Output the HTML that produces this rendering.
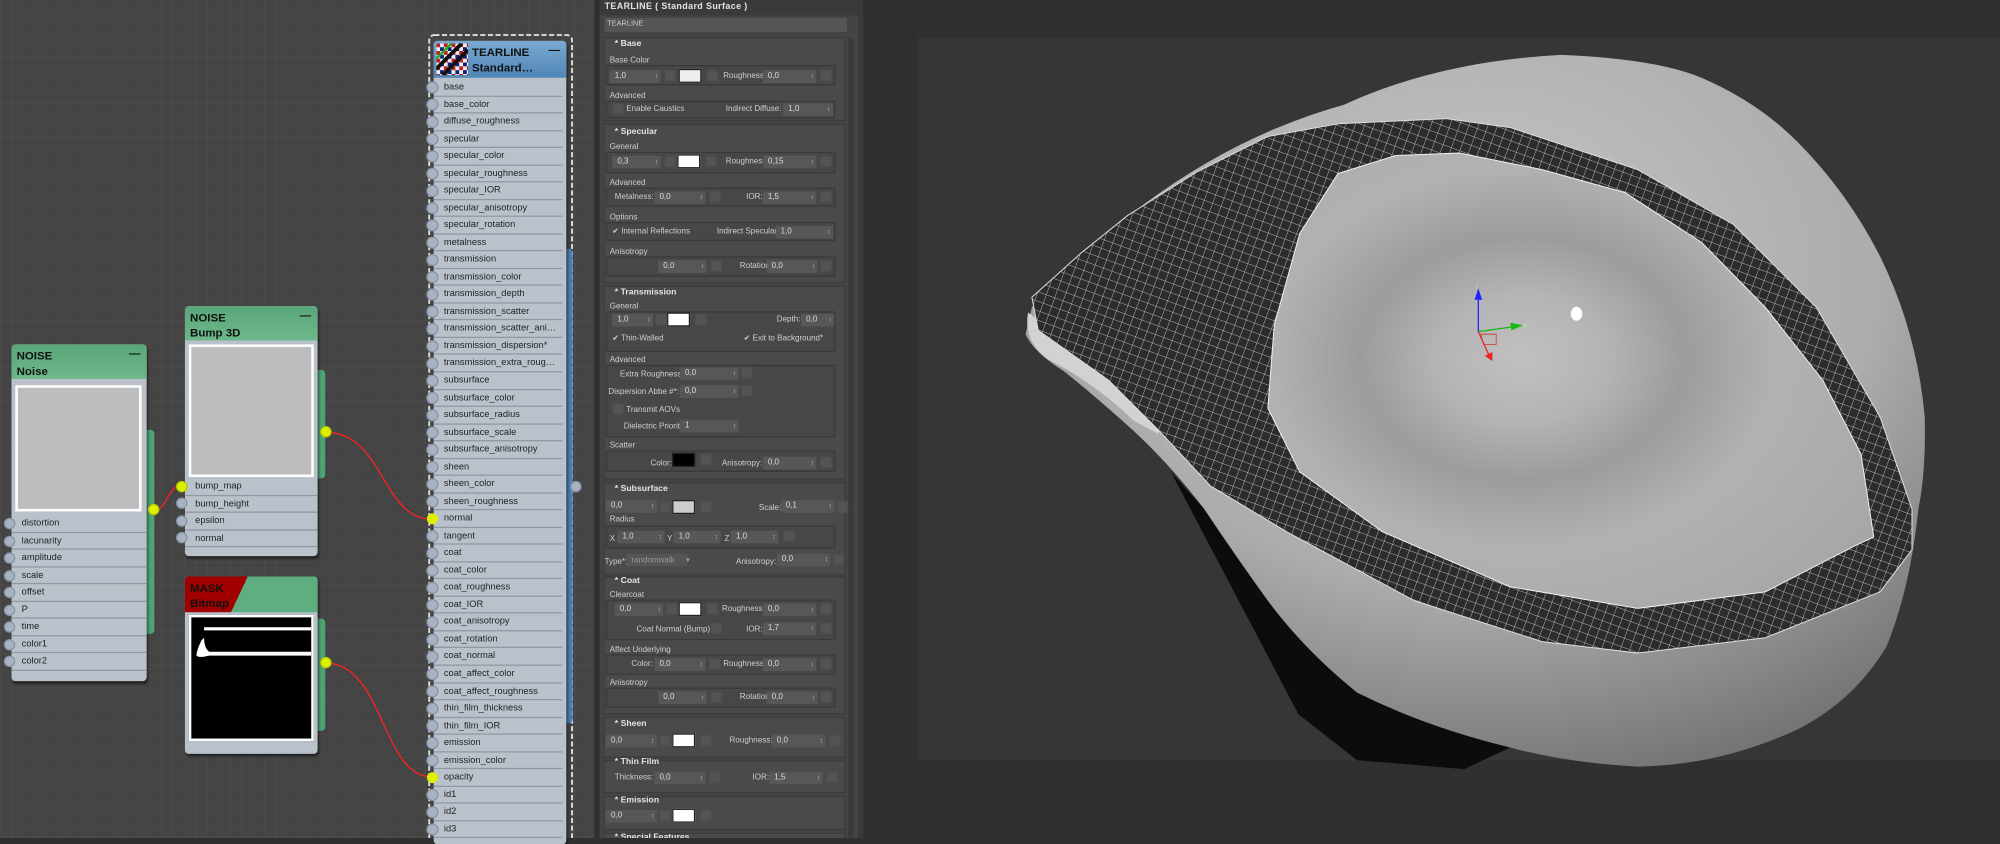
<!DOCTYPE html>
<html><head><meta charset="utf-8">
<style>
*{margin:0;padding:0;box-sizing:border-box}
body{width:2000px;height:838px;overflow:hidden;background:#303030;font-family:"Liberation Sans",sans-serif}
#w{position:absolute;left:0;top:0;width:1568px;height:657px;transform:scale(1.27551);transform-origin:0 0}
.a{position:absolute}
#ne{left:0;top:0;width:466px;height:657px;background-color:#444;
background-image:repeating-linear-gradient(0deg,rgba(255,255,255,.018) 0 1px,transparent 1px 9px),repeating-linear-gradient(90deg,rgba(255,255,255,.018) 0 1px,transparent 1px 9px)}
.node{position:absolute;background:#b9c2ca;border-radius:3px;box-shadow:1px 2px 2px rgba(0,0,0,.5)}
.hd{position:absolute;left:0;top:0;right:0;background:linear-gradient(#5aa579,#6db88b);font:bold 9px "Liberation Sans",sans-serif;color:#111;padding:3px 4px;line-height:12px;border-radius:3px 3px 0 0}
.hd b{position:absolute;right:5px;top:1px;font-weight:bold}
.row{position:absolute;left:0;right:0;height:13.5px;border-bottom:1px solid #8f99a3;font-size:7.3px;color:#222;line-height:12.5px;padding-left:8px}
.s{position:absolute;width:9px;height:9px;border-radius:50%;background:#a7b2c2;border:1px solid #8893a3}
.y{background:#dcf000;border-color:#b9c900}
.prev{position:absolute;background:#bdbdbd;border:2px solid #fff}
.tab{position:absolute;background:#4fa372;border-radius:0 3px 3px 0}
#pn{left:468px;top:0;width:205px;height:657px;background:#444;border-left:2px solid #2d2d2d;overflow:hidden}
.t{position:absolute;font-size:6.3px;color:#cfcfcf;white-space:nowrap}
.h{position:absolute;font-size:6.8px;color:#e4e4e4;font-weight:bold;white-space:nowrap}
.sec{position:absolute;left:3px;width:190px;background:#4a4a4a;border:1px solid #3c3c3c}
.grp{position:absolute;left:5px;width:180px;border:1px solid #393939;background:#474747;border-radius:1px}
.sp{position:absolute;height:10px;background:#575757;font-size:6.3px;color:#ddd;line-height:10px;padding-left:4px}
.sp:after{content:"\2195";position:absolute;right:2px;top:0;font-size:5px;color:#ccc}
.bx{position:absolute;width:9px;height:9px;background:#545454;border:1px solid #4e4e4e}
.sw{position:absolute;width:18px;height:11px;border:1px solid #222}
</style></head><body>
<div id="w">
<div id="ne" class="a"></div>

<svg class="a" style="left:0;top:0" width="466" height="657">
<path d="M121 400 C131 400,131 381,142 381" stroke="#ff2020" stroke-width="1" fill="none"/>
<path d="M256 339 C300 339,300 407,338 407" stroke="#ff2020" stroke-width="1" fill="none"/>
<path d="M256 520 C300 520,300 609,338 609" stroke="#ff2020" stroke-width="1" fill="none"/>
<rect x="336.5" y="27.5" width="112" height="640" rx="4" fill="none" stroke="#ddd" stroke-width="1.5" stroke-dasharray="4 2"/>
</svg>

<div class="tab" style="left:113px;top:337px;width:8px;height:160px"></div>
<div class="node" style="left:9px;top:270px;width:106px;height:264px">
<div class="hd" style="height:27px">NOISE<br>Noise<b>—</b></div>
<div class="prev" style="left:3px;top:32px;width:99px;height:99px"></div>
</div>
<div class="a" style="left:9px;top:404px;width:106px">
<div class="row" style="top:0">distortion</div><div class="row" style="top:13.5px">lacunarity</div><div class="row" style="top:27px">amplitude</div><div class="row" style="top:40.5px">scale</div><div class="row" style="top:54px">offset</div><div class="row" style="top:67.5px">P</div><div class="row" style="top:81px">time</div><div class="row" style="top:94.5px">color1</div><div class="row" style="top:108px">color2</div>
</div>
<div class="s" style="left:3px;top:406px"></div><div class="s" style="left:3px;top:419.5px"></div><div class="s" style="left:3px;top:433px"></div><div class="s" style="left:3px;top:446.5px"></div><div class="s" style="left:3px;top:460px"></div><div class="s" style="left:3px;top:473.5px"></div><div class="s" style="left:3px;top:487px"></div><div class="s" style="left:3px;top:500.5px"></div><div class="s" style="left:3px;top:514px"></div>
<div class="s y" style="left:116px;top:395px"></div>

<div class="tab" style="left:247px;top:290px;width:8px;height:85px"></div>
<div class="node" style="left:145px;top:240px;width:104px;height:196px">
<div class="hd" style="height:27px">NOISE<br>Bump 3D<b>—</b></div>
<div class="prev" style="left:3px;top:30px;width:98px;height:104px"></div>
</div>
<div class="a" style="left:145px;top:375px;width:104px">
<div class="row" style="top:0">bump_map</div><div class="row" style="top:13.5px">bump_height</div><div class="row" style="top:27px">epsilon</div><div class="row" style="top:40.5px">normal</div>
</div>
<div class="s y" style="left:138px;top:376.5px"></div><div class="s" style="left:138px;top:390px"></div><div class="s" style="left:138px;top:403.5px"></div><div class="s" style="left:138px;top:417px"></div>
<div class="s y" style="left:251px;top:334px"></div>

<div class="tab" style="left:247px;top:485px;width:8px;height:88px"></div>
<div class="node" style="left:145px;top:452px;width:104px;height:139px">
<div class="hd" style="height:28px;background:linear-gradient(115deg,#a00000 0 42%,#5fae80 42%)">MASK<br>Bitmap</div>
<div class="prev" style="left:3px;top:30px;width:98px;height:99px;background:#000"></div>
<svg class="a" style="left:5px;top:32px" width="94" height="40"><path d="M10 9 H94" stroke="#fff" stroke-width="2.5"/><path d="M8 18 Q4 26 4 30 Q6 32 14 30 L94 30 V27 L14 27 Q10 24 10 16Z" fill="#fff"/></svg>
</div>
<div class="s y" style="left:251px;top:515px"></div>

<div class="a" style="left:443px;top:195px;width:6px;height:372px;background:#4c7fae;border-radius:0 3px 3px 0"></div>
<div class="s" style="left:447px;top:377px"></div>
<div class="node" style="left:340px;top:32px;width:104px;height:630px;border-radius:3px">
<div class="hd" style="height:29px;background:linear-gradient(#7aa9d2,#4f86b8);padding-left:30px">TEARLINE<br>Standard…<b>—</b></div>
<svg class="a" style="left:2px;top:2px" width="25" height="25"><defs><pattern id="ck" width="6" height="6" patternUnits="userSpaceOnUse"><rect width="6" height="6" fill="#eee"/><rect width="3" height="3" fill="#c02020"/><rect x="3" y="3" width="3" height="3" fill="#102080"/></pattern></defs><rect width="25" height="25" fill="url(#ck)"/><path d="M0 20 L20 0 M5 25 L25 5" stroke="#111" stroke-width="3"/><path d="M0 12 L12 0" stroke="#2a2" stroke-width="2"/></svg>
</div>
<div class="a" style="left:340px;top:62px;width:101px">
<div class="row" style="top:0px">base</div><div class="row" style="top:13.53px">base_color</div><div class="row" style="top:27.06px">diffuse_roughness</div><div class="row" style="top:40.59px">specular</div><div class="row" style="top:54.12px">specular_color</div><div class="row" style="top:67.65px">specular_roughness</div><div class="row" style="top:81.18px">specular_IOR</div><div class="row" style="top:94.71px">specular_anisotropy</div><div class="row" style="top:108.24px">specular_rotation</div><div class="row" style="top:121.77px">metalness</div><div class="row" style="top:135.3px">transmission</div><div class="row" style="top:148.83px">transmission_color</div><div class="row" style="top:162.36px">transmission_depth</div><div class="row" style="top:175.89px">transmission_scatter</div><div class="row" style="top:189.42px">transmission_scatter_ani…</div><div class="row" style="top:202.95px">transmission_dispersion*</div><div class="row" style="top:216.48px">transmission_extra_roug…</div><div class="row" style="top:230.01px">subsurface</div><div class="row" style="top:243.54px">subsurface_color</div><div class="row" style="top:257.07px">subsurface_radius</div><div class="row" style="top:270.6px">subsurface_scale</div><div class="row" style="top:284.13px">subsurface_anisotropy</div><div class="row" style="top:297.66px">sheen</div><div class="row" style="top:311.19px">sheen_color</div><div class="row" style="top:324.72px">sheen_roughness</div><div class="row" style="top:338.25px">normal</div><div class="row" style="top:351.78px">tangent</div><div class="row" style="top:365.31px">coat</div><div class="row" style="top:378.84px">coat_color</div><div class="row" style="top:392.37px">coat_roughness</div><div class="row" style="top:405.9px">coat_IOR</div><div class="row" style="top:419.43px">coat_anisotropy</div><div class="row" style="top:432.96px">coat_rotation</div><div class="row" style="top:446.49px">coat_normal</div><div class="row" style="top:460.02px">coat_affect_color</div><div class="row" style="top:473.55px">coat_affect_roughness</div><div class="row" style="top:487.08px">thin_film_thickness</div><div class="row" style="top:500.61px">thin_film_IOR</div><div class="row" style="top:514.14px">emission</div><div class="row" style="top:527.67px">emission_color</div><div class="row" style="top:541.2px">opacity</div><div class="row" style="top:554.73px">id1</div><div class="row" style="top:568.26px">id2</div><div class="row" style="top:581.79px">id3</div>
</div>
<svg class="a" style="left:333px;top:62px" width="12" height="595">
<g fill="#a7b2c2" stroke="#8893a3" stroke-width="1">
<circle cx="6" cy="6.5" r="4.3"/><circle cx="6" cy="20" r="4.3"/><circle cx="6" cy="33.6" r="4.3"/><circle cx="6" cy="47.1" r="4.3"/><circle cx="6" cy="60.6" r="4.3"/><circle cx="6" cy="74.2" r="4.3"/><circle cx="6" cy="87.7" r="4.3"/><circle cx="6" cy="101.2" r="4.3"/><circle cx="6" cy="114.7" r="4.3"/><circle cx="6" cy="128.3" r="4.3"/><circle cx="6" cy="141.8" r="4.3"/><circle cx="6" cy="155.3" r="4.3"/><circle cx="6" cy="168.9" r="4.3"/><circle cx="6" cy="182.4" r="4.3"/><circle cx="6" cy="195.9" r="4.3"/><circle cx="6" cy="209.5" r="4.3"/><circle cx="6" cy="223" r="4.3"/><circle cx="6" cy="236.5" r="4.3"/><circle cx="6" cy="250" r="4.3"/><circle cx="6" cy="263.6" r="4.3"/><circle cx="6" cy="277.1" r="4.3"/><circle cx="6" cy="290.6" r="4.3"/><circle cx="6" cy="304.2" r="4.3"/><circle cx="6" cy="317.7" r="4.3"/><circle cx="6" cy="331.2" r="4.3"/><circle cx="6" cy="358.3" r="4.3"/><circle cx="6" cy="371.8" r="4.3"/><circle cx="6" cy="385.3" r="4.3"/><circle cx="6" cy="398.9" r="4.3"/><circle cx="6" cy="412.4" r="4.3"/><circle cx="6" cy="425.9" r="4.3"/><circle cx="6" cy="439.5" r="4.3"/><circle cx="6" cy="453" r="4.3"/><circle cx="6" cy="466.5" r="4.3"/><circle cx="6" cy="480.1" r="4.3"/><circle cx="6" cy="493.6" r="4.3"/><circle cx="6" cy="507.1" r="4.3"/><circle cx="6" cy="520.6" r="4.3"/><circle cx="6" cy="534.2" r="4.3"/><circle cx="6" cy="561.2" r="4.3"/><circle cx="6" cy="574.8" r="4.3"/><circle cx="6" cy="588.3" r="4.3"/>
</g>
<circle cx="6" cy="344.8" r="4.3" fill="#dcf000"/><circle cx="6" cy="547.7" r="4.3" fill="#dcf000"/>
</svg>

<!-- panel -->
<div id="pn" class="a">
<div class="a" style="left:0;top:0;width:203px;height:12px;background:#3a3a3a"></div>
<div class="h" style="left:4px;top:2px;font-size:7px;letter-spacing:.3px">TEARLINE ( Standard Surface )</div>
<div class="a" style="left:4px;top:14px;width:190px;height:11px;background:#555"></div>
<div class="t" style="left:6px;top:16px;font-size:5.8px">TEARLINE</div>
<div class="a" style="left:195px;top:30px;width:4px;height:627px;background:#3a3a3a"></div>

<div class="sec" style="top:29px;height:66px"></div>
<div class="h" style="left:12px;top:31px">* Base</div>
<div class="grp" style="top:51px;height:16px"></div><div class="t" style="left:8px;top:44px">Base Color</div>
<div class="sp" style="left:8px;top:55px;width:40px">1,0</div><div class="bx" style="left:51px;top:55px"></div><div class="sw" style="left:62px;top:54px;background:#eee"></div><div class="bx" style="left:84px;top:55px"></div><div class="t" style="left:97px;top:56px">Roughness:</div><div class="sp" style="left:128px;top:55px;width:42px">0,0</div><div class="bx" style="left:173px;top:55px"></div>
<div class="grp" style="top:79px;height:14px"></div><div class="t" style="left:8px;top:72px">Advanced</div>
<div class="bx" style="left:10px;top:81px"></div><div class="t" style="left:21px;top:82px">Enable Caustics</div><div class="t" style="left:99px;top:82px">Indirect Diffuse:</div><div class="sp" style="left:144px;top:81px;width:39px">1,0</div>

<div class="sec" style="top:97px;height:125px"></div>
<div class="h" style="left:12px;top:100px">* Specular</div>
<div class="grp" style="top:119px;height:17px"></div><div class="t" style="left:8px;top:112px">General</div>
<div class="sp" style="left:10px;top:122px;width:38px">0,3</div><div class="bx" style="left:51px;top:122px"></div><div class="sw" style="left:61px;top:121px;background:#fff"></div><div class="bx" style="left:83px;top:122px"></div><div class="t" style="left:99px;top:123px">Roughness:</div><div class="sp" style="left:128px;top:122px;width:42px">0,15</div><div class="bx" style="left:173px;top:122px"></div>
<div class="grp" style="top:147px;height:15px"></div><div class="t" style="left:8px;top:140px">Advanced</div>
<div class="t" style="left:12px;top:151px">Metalness:</div><div class="sp" style="left:43px;top:150px;width:40px">0,0</div><div class="bx" style="left:86px;top:150px"></div><div class="t" style="left:115px;top:151px">IOR:</div><div class="sp" style="left:128px;top:150px;width:42px">1,5</div><div class="bx" style="left:173px;top:150px"></div>
<div class="grp" style="top:174px;height:15px"></div><div class="t" style="left:8px;top:167px">Options</div>
<div class="t" style="left:10px;top:178px">✔ Internal Reflections</div><div class="t" style="left:92px;top:178px">Indirect Specular:</div><div class="sp" style="left:138px;top:177px;width:45px">1,0</div>
<div class="grp" style="top:201px;height:16px"></div><div class="t" style="left:8px;top:194px">Anisotropy</div>
<div class="sp" style="left:46px;top:204px;width:38px">0,0</div><div class="bx" style="left:87px;top:204px"></div><div class="t" style="left:110px;top:205px">Rotation:</div><div class="sp" style="left:131px;top:204px;width:40px">0,0</div><div class="bx" style="left:173px;top:204px"></div>

<div class="sec" style="top:224px;height:152px"></div>
<div class="h" style="left:12px;top:226px">* Transmission</div>
<div class="grp" style="top:244px;height:32px"></div><div class="t" style="left:8px;top:237px">General</div>
<div class="sp" style="left:10px;top:246px;width:32px">1,0</div><div class="bx" style="left:44px;top:246px"></div><div class="sw" style="left:53px;top:245px;background:#fff"></div><div class="bx" style="left:75px;top:246px"></div><div class="t" style="left:139px;top:247px">Depth:</div><div class="sp" style="left:158px;top:246px;width:26px">0,0</div>
<div class="t" style="left:10px;top:262px">✔ Thin-Walled</div><div class="t" style="left:113px;top:262px">✔ Exit to Background*</div>
<div class="grp" style="top:286px;height:57px"></div><div class="t" style="left:8px;top:279px">Advanced</div>
<div class="t" style="left:16px;top:290px">Extra Roughness:</div><div class="sp" style="left:63px;top:288px;width:46px">0,0</div><div class="bx" style="left:111px;top:288px"></div>
<div class="t" style="left:7px;top:304px">Dispersion Abbe #*:</div><div class="sp" style="left:63px;top:302px;width:46px">0,0</div><div class="bx" style="left:111px;top:302px"></div>
<div class="bx" style="left:10px;top:316px"></div><div class="t" style="left:21px;top:318px">Transmit AOVs</div>
<div class="t" style="left:19px;top:331px">Dielectric Priority</div><div class="sp" style="left:63px;top:329px;width:46px">1</div>
<div class="grp" style="top:353px;height:17px"></div><div class="t" style="left:8px;top:346px">Scatter</div>
<div class="t" style="left:40px;top:360px">Color:</div><div class="sw" style="left:57px;top:355px;background:#000"></div><div class="bx" style="left:79px;top:356px"></div><div class="t" style="left:96px;top:360px">Anisotropy:</div><div class="sp" style="left:128px;top:358px;width:42px">0,0</div><div class="bx" style="left:173px;top:358px"></div>

<div class="sec" style="top:378px;height:73px"></div>
<div class="h" style="left:12px;top:380px">* Subsurface</div>
<div class="sp" style="left:5px;top:392px;width:40px">0,0</div><div class="bx" style="left:47px;top:393px"></div><div class="sw" style="left:57px;top:392px;background:#ccc"></div><div class="bx" style="left:79px;top:393px"></div><div class="t" style="left:125px;top:395px">Scale:</div><div class="sp" style="left:142px;top:392px;width:42px">0,1</div><div class="bx" style="left:186px;top:393px"></div>
<div class="grp" style="top:412px;height:18px"></div><div class="t" style="left:8px;top:404px">Radius</div>
<div class="t" style="left:8px;top:419px">X</div><div class="sp" style="left:14px;top:416px;width:37px">1,0</div><div class="t" style="left:53px;top:419px">Y</div><div class="sp" style="left:58px;top:416px;width:37px">1,0</div><div class="t" style="left:98px;top:419px">Z</div><div class="sp" style="left:103px;top:416px;width:37px">1,0</div><div class="bx" style="left:144px;top:416px"></div>
<div class="t" style="left:4px;top:437px">Type*:</div><div class="a" style="left:21px;top:434px;width:48px;height:10px;background:#555"></div><div class="t" style="left:25px;top:436px;color:#999">randomwalk &nbsp; &nbsp; ▾</div><div class="t" style="left:107px;top:437px">Anisotropy:</div><div class="sp" style="left:139px;top:434px;width:42px">0,0</div><div class="bx" style="left:183px;top:434px"></div>

<div class="sec" style="top:452px;height:108px"></div>
<div class="h" style="left:12px;top:452px">* Coat</div>
<div class="grp" style="top:470px;height:32px"></div><div class="t" style="left:8px;top:463px">Clearcoat</div>
<div class="sp" style="left:12px;top:473px;width:38px">0,0</div><div class="bx" style="left:52px;top:473px"></div><div class="sw" style="left:62px;top:472px;background:#fff"></div><div class="bx" style="left:84px;top:473px"></div><div class="t" style="left:96px;top:474px">Roughness:</div><div class="sp" style="left:128px;top:473px;width:42px">0,0</div><div class="bx" style="left:173px;top:473px"></div>
<div class="t" style="left:29px;top:490px">Coat Normal (Bump):</div><div class="bx" style="left:87px;top:488px"></div><div class="t" style="left:115px;top:490px">IOR:</div><div class="sp" style="left:128px;top:488px;width:42px">1,7</div><div class="bx" style="left:173px;top:488px"></div>
<div class="grp" style="top:513px;height:16px"></div><div class="t" style="left:8px;top:506px">Affect Underlying</div>
<div class="t" style="left:25px;top:517px">Color:</div><div class="sp" style="left:43px;top:516px;width:40px">0,0</div><div class="bx" style="left:86px;top:516px"></div><div class="t" style="left:97px;top:517px">Roughness:</div><div class="sp" style="left:128px;top:516px;width:42px">0,0</div><div class="bx" style="left:173px;top:516px"></div>
<div class="grp" style="top:539px;height:16px"></div><div class="t" style="left:8px;top:532px">Anisotropy</div>
<div class="sp" style="left:46px;top:542px;width:38px">0,0</div><div class="bx" style="left:87px;top:542px"></div><div class="t" style="left:110px;top:543px">Rotation:</div><div class="sp" style="left:131px;top:542px;width:40px">0,0</div><div class="bx" style="left:173px;top:542px"></div>

<div class="sec" style="top:562px;height:32px"></div>
<div class="h" style="left:12px;top:564px">* Sheen</div>
<div class="sp" style="left:5px;top:576px;width:40px">0,0</div><div class="bx" style="left:47px;top:576px"></div><div class="sw" style="left:57px;top:575px;background:#fff"></div><div class="bx" style="left:79px;top:576px"></div><div class="t" style="left:102px;top:577px">Roughness:</div><div class="sp" style="left:135px;top:576px;width:42px">0,0</div><div class="bx" style="left:180px;top:576px"></div>

<div class="sec" style="top:596px;height:26px"></div>
<div class="h" style="left:12px;top:594px">* Thin Film</div>
<div class="t" style="left:12px;top:606px">Thickness:</div><div class="sp" style="left:43px;top:605px;width:40px">0,0</div><div class="bx" style="left:86px;top:605px"></div><div class="t" style="left:120px;top:606px">IOR:</div><div class="sp" style="left:133px;top:605px;width:42px">1,5</div><div class="bx" style="left:178px;top:605px"></div>

<div class="sec" style="top:624px;height:27px"></div>
<div class="h" style="left:12px;top:624px">* Emission</div>
<div class="sp" style="left:5px;top:635px;width:40px">0,0</div><div class="bx" style="left:47px;top:635px"></div><div class="sw" style="left:57px;top:634px;background:#fff"></div><div class="bx" style="left:79px;top:635px"></div>
<div class="sec" style="top:653px;height:10px"></div>
<div class="h" style="left:12px;top:653px">* Special Features</div>
</div>

<div class="a" style="left:673px;top:0;width:45px;height:657px;background:#2f2f2f"></div>
<div class="a" style="left:673px;top:0;width:4px;height:657px;background:#3a3a3a"></div>

<!-- viewport -->
<div class="a" style="left:718px;top:0;width:850px;height:657px;background:#303030"></div>
<div class="a" style="left:720px;top:30px;width:848px;height:566px;background:#363636"></div>
<svg class="a" style="left:718px;top:0" width="850" height="657">
<defs>
<radialGradient id="bg" cx="0.5" cy="0.3" r="0.75"><stop offset="0" stop-color="#c6c6c6"/><stop offset=".6" stop-color="#acacac"/><stop offset="1" stop-color="#727272"/></radialGradient>
<radialGradient id="ig" cx="0.42" cy="0.45" r="0.7"><stop offset="0" stop-color="#c0c0c0"/><stop offset=".2" stop-color="#b4b4b4"/><stop offset=".38" stop-color="#9c9c9c"/><stop offset=".6" stop-color="#b2b2b2"/><stop offset="1" stop-color="#a6a6a6"/></radialGradient>
<pattern id="mg" width="7" height="7" patternUnits="userSpaceOnUse" patternTransform="rotate(20)"><rect width="7" height="7" fill="#2c2c2c"/><path d="M0 0H7M0 0V7" stroke="#dcdcdc" stroke-width=".6"/></pattern>
</defs>
<path d="M200 370 L300 560 L346 596 L430 603 L466 586 L346 543 L276 471 L226 399Z" fill="#0c0c0c"/>
<path d="M91 241 Q200 120 336 82 Q410 48 506 43 Q580 46 616 61 Q660 80 691 111 Q730 150 756 201 Q785 260 791 327 Q792 370 786 399 Q780 460 761 507 Q735 550 691 572 Q630 600 566 601 Q510 598 466 586 Q400 570 346 543 Q305 510 276 471 Q250 435 226 399 Q200 365 171 338 Q140 310 116 291 Q92 276 86 262Z" fill="url(#bg)"/>
<path d="M88 245 Q84 268 104 282 Q140 300 171 330 L190 340 L196 325 Q150 290 88 245Z" fill="#d2d2d2"/>
<path d="M91 233 L130 198 L166 169 L220 135 L276 107 L331 97 L416 93 L466 100 L566 133 L641 176 L706 241 L756 327 L781 399 L781 431 L756 464 L666 500 L566 512 L491 503 L391 471 L291 417 L231 381 L191 338 L151 298 L96 259Z" fill="url(#mg)" stroke="#ddd" stroke-width=".8"/>
<path d="M331 136 L376 122 L426 120 L491 133 L556 151 L616 190 L666 241 L711 298 L741 356 L751 421 L736 428 L666 464 L566 477 L466 460 L366 417 L301 370 L276 320 L281 255 L301 183Z" fill="url(#ig)" stroke="#eee" stroke-width=".8"/>
<ellipse cx="518" cy="246" rx="4.5" ry="5.5" fill="#fff"/>
<path d="M441 260 V233" stroke="#22f" stroke-width="1"/><path d="M438 235 L441 226 L444 235Z" fill="#22f"/>
<text x="439" y="226" font-size="4" fill="#ccf" font-family="Liberation Sans">z</text>
<path d="M441 260 L470 256" stroke="#1b1" stroke-width="1"/><path d="M466 253 L476 255 L467 259Z" fill="#1b1"/>
<text x="477" y="256" font-size="4" fill="#cfc" font-family="Liberation Sans">y</text>
<path d="M441 260 L450 280" stroke="#e22" stroke-width="1"/><path d="M446 279 L452 283 L452 276Z" fill="#e22"/>
<path d="M443 262 H455 V270 H445Z" fill="none" stroke="#c33" stroke-width=".6"/>
</svg>
</div>
</body></html>
